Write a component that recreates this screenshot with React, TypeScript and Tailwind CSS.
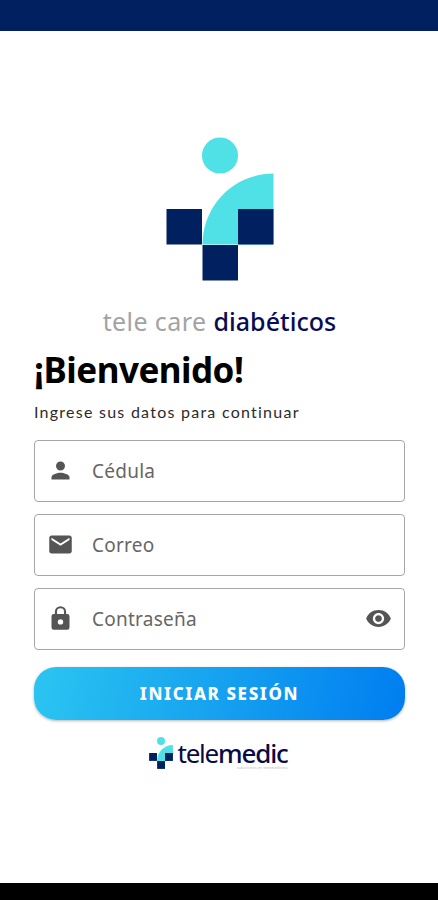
import React from "react";
import { MdEmail, MdPerson, MdVisibility } from "react-icons/md";

interface FieldProps {
  icon: React.ComponentType<{ className?: string }>;
  label: string;
  trailing?: React.ReactNode;
}

const LogoMark: React.FC<{ className: string }> = ({ className }) => (
  <svg viewBox="0 0 108 144" className={className} aria-hidden="true">
    <circle cx="54" cy="18.5" r="18" fill="#4fe1e6" />
    <path d="M36.5 107.5C36.5 68 68 36.5 107.5 36.5V107.5Z" fill="#4fe1e6" />
    <rect x="0.5" y="72" width="35.5" height="35.5" fill="#00205f" />
    <rect x="72" y="72" width="35.5" height="35.5" fill="#00205f" />
    <rect x="36.5" y="108" width="35.5" height="35.5" fill="#00205f" />
  </svg>
);

const LockIcon: React.FC<{ className?: string }> = ({ className }) => (
  <svg viewBox="0 0 24 24" className={className} fill="currentColor" aria-hidden="true">
    <path
      fillRule="evenodd"
      d="M18 8h-1V6A5 5 0 0 0 7 6v2H6a2 2 0 0 0-2 2v10a2 2 0 0 0 2 2h12a2 2 0 0 0 2-2V10a2 2 0 0 0-2-2ZM12 17.4a2.4 2.4 0 1 1 0-4.8 2.4 2.4 0 0 1 0 4.8ZM8.9 8V6a3.1 3.1 0 0 1 6.2 0v2Z"
    />
  </svg>
);

const Field: React.FC<FieldProps> = ({ icon: Icon, label, trailing }) => (
  <label className="flex h-[62px] items-center rounded-[4px] border border-[#a6a6a6] px-[12px] pb-px text-[#555]">
    <Icon className="size-[27px] shrink-0" />
    <span className="ml-[18px] pt-[2px] text-[19px] leading-none tracking-[0.25px] whitespace-nowrap text-[#666]">
      {label}
    </span>
    {trailing}
  </label>
);

const App: React.FC = () => {
  return (
    <div className="flex h-[900px] w-[438px] flex-col bg-white font-['Noto_Sans',sans-serif]">
      {/* Status bar */}
      <div className="h-[31px] shrink-0 bg-[#00205f]" />

      <main className="flex flex-1 flex-col pt-[106px] pr-[33px] pl-[34px]">
        {/* Brand */}
        <div className="flex flex-col items-center">
          <LogoMark className="h-[144px] w-[108px]" />
          <p className="mt-[22px] flex h-[38px] items-center gap-[7px] text-[25px] whitespace-nowrap">
            <span className="tracking-[0.4px] text-[#a3a3a3]">tele care</span>
            <span className="font-medium tracking-[0.05px] text-[#080b55]">diabéticos</span>
          </p>
        </div>

        <h1 className="mt-[6px] h-[46px] text-[35px] leading-[46px] font-bold tracking-[-0.5px] whitespace-nowrap text-black">
          ¡Bienvenido!
        </h1>
        <p className="mt-[8px] h-[22px] font-['Lato',sans-serif] text-[16px] leading-[22px] tracking-[1.25px] whitespace-nowrap text-[#2b2b2b]">
          Ingrese sus datos para continuar
        </p>

        {/* Login form */}
        <form className="mt-[17px] flex flex-col gap-[12px]">
          <Field icon={MdPerson} label="Cédula" />
          <Field icon={MdEmail} label="Correo" />
          <Field
            icon={LockIcon}
            label="Contraseña"
            trailing={<MdVisibility className="ml-auto size-[27px]" />}
          />
          <button
            type="button"
            className="mt-[5px] h-[53px] rounded-[22px] bg-linear-[100deg] from-[#2bc5f1] to-[#007df0] text-[17px] font-extrabold tracking-[1.6px] text-white shadow-[0_1px_3px_rgba(0,0,0,0.3)]"
          >
            INICIAR SESIÓN
          </button>
        </form>

        {/* Footer brand */}
        <div className="mt-[17px] flex justify-center gap-[4px] pr-[2px]">
          <LogoMark className="h-[32px] w-[24px]" />
          <div className="flex flex-col">
            <p className="h-[29px] text-[26px] leading-[32px] tracking-[-1.2px] whitespace-nowrap text-[#080b45]">
              tele<span className="font-medium">medic</span>
            </p>
            <span className="self-end text-[4px] leading-[4px] whitespace-nowrap text-[#bbb]">
              soluciones en telemedicina
            </span>
          </div>
        </div>
      </main>

      {/* Navigation bar */}
      <div className="h-[17px] shrink-0 bg-black" />
    </div>
  );
};

export default App;
